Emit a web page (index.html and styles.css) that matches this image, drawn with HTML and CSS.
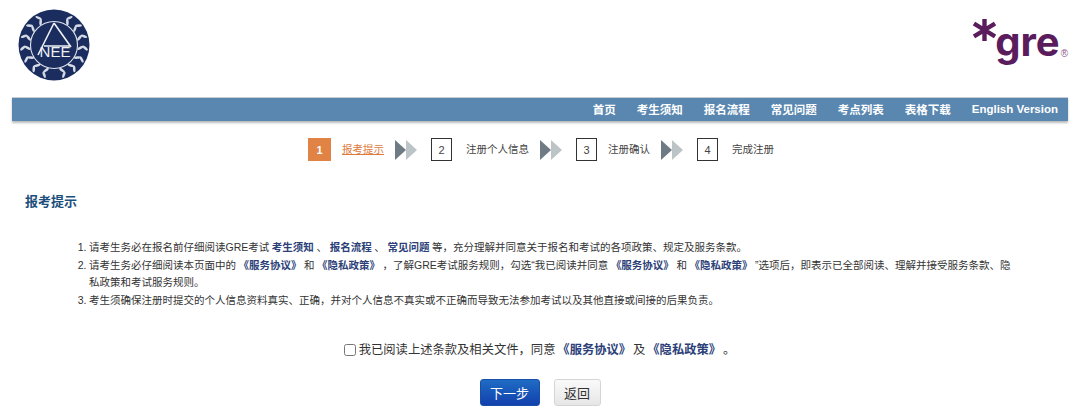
FILE: index.html
```html
<!DOCTYPE html>
<html lang="zh-CN">
<head>
  <meta charset="utf-8" />
  <title>GRE 报考提示</title>
  <link rel="stylesheet" href="styles.css">
</head>
<body>
  <div class="header">
    <svg class="nee-logo" width="72" height="72" viewBox="0 0 72 72">
      <defs>
        <g id="leaf">
          <ellipse cx="38" cy="4.8" rx="1.3" ry="3.4" fill="#d5dbe6" transform="rotate(40 38 4.8)"/>
          <ellipse cx="38" cy="9.6" rx="1.3" ry="3.4" fill="#d5dbe6" transform="rotate(-30 38 9.6)"/>
        </g>
        <g id="laurel">
          <use href="#leaf" transform="rotate(26 36 36)"/>
          <use href="#leaf" transform="rotate(48 36 36)"/>
          <use href="#leaf" transform="rotate(70 36 36)"/>
          <use href="#leaf" transform="rotate(92 36 36)"/>
          <use href="#leaf" transform="rotate(114 36 36)"/>
          <use href="#leaf" transform="rotate(136 36 36)"/>
          <use href="#leaf" transform="rotate(158 36 36)"/>
        </g>
      </defs>
      <circle cx="36" cy="36" r="35.5" fill="#1b2d5e"/>
      <use href="#laurel"/>
      <use href="#laurel" transform="translate(72 0) scale(-1 1)"/>
      <circle cx="36" cy="36" r="23.5" fill="#1b2d5e" stroke="#dfe4ec" stroke-width="1.1"/>
      <path d="M36 14 L20 46 M36 14 L53 38 M26 37 H53" fill="none" stroke="#eef1f5" stroke-width="1.6"/>
      <text class="nee-text" x="37" y="47.5" text-anchor="middle">NEE</text>
    </svg>
    <div class="gre-logo">
      <svg class="gre-star" width="23" height="22" viewBox="0 0 23 22">
        <path d="M11.5 0 V22 M1 4.5 L22 17.5 M22 4.5 L1 17.5" fill="none" stroke="#5b1c5e" stroke-width="4.4"/>
      </svg>
      <span class="gre-word">gre</span><span class="gre-reg">®</span>
    </div>
  </div>

  <div class="nav">
    <a href="#">首页</a>
    <a href="#">考生须知</a>
    <a href="#">报名流程</a>
    <a href="#">常见问题</a>
    <a href="#">考点列表</a>
    <a href="#">表格下载</a>
    <a href="#">English Version</a>
  </div>

  <div class="steps">
    <span class="step-num active">1</span>
    <a class="step-label current" href="#">报考提示</a>
    <svg class="step-arrows" width="22" height="20" viewBox="0 0 22 20"><path d="M0 0 L11 10 L0 20Z" fill="#6f7b84"/><path d="M11 0 L22 10 L11 20Z" fill="#bcc4c8"/></svg>
    <span class="step-num">2</span>
    <span class="step-label wide">注册个人信息</span>
    <svg class="step-arrows" width="22" height="20" viewBox="0 0 22 20"><path d="M0 0 L11 10 L0 20Z" fill="#6f7b84"/><path d="M11 0 L22 10 L11 20Z" fill="#bcc4c8"/></svg>
    <span class="step-num">3</span>
    <span class="step-label">注册确认</span>
    <svg class="step-arrows" width="22" height="20" viewBox="0 0 22 20"><path d="M0 0 L11 10 L0 20Z" fill="#6f7b84"/><path d="M11 0 L22 10 L11 20Z" fill="#bcc4c8"/></svg>
    <span class="step-num">4</span>
    <span class="step-label wide">完成注册</span>
  </div>

  <h2 class="title">报考提示</h2>

  <ol class="notes">
    <li>请考生务必在报名前仔细阅读GRE考试 <a href="#">考生须知</a><span class="sep">、</span><a href="#">报名流程</a><span class="sep">、</span><a href="#">常见问题</a> 等，充分理解并同意关于报名和考试的各项政策、规定及服务条款。</li>
    <li>请考生务必仔细阅读本页面中的 <a href="#">《服务协议》</a> 和 <a href="#">《隐私政策》</a> ，了解GRE考试服务规则，勾选“我已阅读并同意 <a href="#">《服务协议》</a> 和 <a href="#">《隐私政策》</a> ”选项后，即表示已全部阅读、理解并接受服务条款、隐私政策和考试服务规则。</li>
    <li>考生须确保注册时提交的个人信息资料真实、正确，并对个人信息不真实或不正确而导致无法参加考试以及其他直接或间接的后果负责。</li>
  </ol>

  <label class="agree">
    <input type="checkbox">
    <span>我已阅读上述条款及相关文件，同意 <a href="#">《服务协议》</a> 及 <a href="#">《隐私政策》</a> 。</span>
  </label>

  <div class="actions">
    <button class="btn-next">下一步</button>
    <button class="btn-back">返回</button>
  </div>
</body>
</html>
```

FILE: styles.css
```css
body {
  margin: 0;
  background-color: #fff;
  color: #333;
  font-family: "Liberation Sans", "Noto Sans CJK SC", sans-serif;
  font-size: 10.5px;
  overflow: hidden;
}

a {
  text-decoration: none;
}

.header {
  height: 97px;
  padding: 9px 12px 0 18px;
  box-sizing: border-box;
  display: flex;
  justify-content: space-between;
  align-items: flex-start;
}

.nee-text {
  font-family: "Liberation Sans", sans-serif;
  font-size: 15px;
  fill: #eef1f5;
}

.gre-logo {
  display: flex;
  align-items: flex-start;
  color: #5b1c5e;
  margin-top: 10px;
}

.gre-word {
  font-family: "Inter", sans-serif;
  font-size: 40px;
  font-weight: 700;
  line-height: 46px;
  margin-top: 0;
  margin-left: -1px;
}

.gre-reg {
  font-size: 10px;
  line-height: 10px;
  margin-top: 30px;
  margin-left: 1px;
  color: #8a5a8f;
}

.nav {
  margin: 0 12px;
  height: 24px;
  padding: 0 10px 2px 0;
  background-color: #5a87b0;
  border-top: 1px solid #c9ccce;
  box-shadow: 0 2px 2px #b8babc;
  box-sizing: border-box;
  display: flex;
  justify-content: flex-end;
  align-items: center;
  gap: 21px;
}

.nav a {
  color: #fff;
  font-size: 11.5px;
  font-weight: bold;
}

.steps {
  margin-top: 17px;
  height: 23px;
  padding-left: 2px;
  display: flex;
  justify-content: center;
  align-items: center;
}

.step-num {
  width: 21px;
  height: 23px;
  box-sizing: border-box;
  border: 1px solid #333;
  display: flex;
  align-items: center;
  justify-content: center;
  font-size: 11px;
  color: #444;
}

.step-num.active {
  width: 23px;
  background-color: #e08344;
  border-color: #e08344;
  color: #fff;
  font-weight: bold;
}

.step-label {
  margin-left: 11px;
  margin-bottom: 2px;
  color: #444;
}

.step-label.wide {
  margin-left: 14px;
}

.step-label.current {
  color: #dd7a3c;
  text-decoration: underline;
}

.step-arrows {
  margin: 0 14px 0 11px;
}

.title {
  margin: 33px 0 0 25px;
  font-size: 13px;
  line-height: 16px;
  color: #1d4f7c;
}

.notes {
  margin: 29px 0 0;
  padding: 0 66px 0 89px;
  line-height: 17.7px;
  word-spacing: -0.4px;
  color: #333;
}

.notes a {
  color: #2c3f78;
  font-weight: bold;
}

.sep {
  margin: 0 2.7px;
}

.agree {
  margin-top: 30px;
  display: flex;
  justify-content: center;
  align-items: center;
  font-size: 12.3px;
  line-height: 20px;
  padding-right: 1px;
  word-spacing: -1.5px;
}

.agree input {
  margin: 0 3px 0 0;
  width: 12px;
  height: 12px;
}

.agree a {
  color: #2c3f78;
  font-weight: bold;
}

.actions {
  margin-top: 19px;
  display: flex;
  justify-content: center;
  gap: 14px;
}

.actions button {
  height: 27px;
  border-radius: 3px;
  font-family: inherit;
  font-size: 13px;
  padding: 0;
}

.btn-next {
  width: 60px;
  color: #fff;
  background: linear-gradient(to bottom, #1f6cc4, #1240ad);
  border: 1px solid #1a4fa8;
}

.btn-back {
  width: 47px;
  color: #333;
  background: linear-gradient(to bottom, #fafafa, #e6e6e6);
  border: 1px solid #d5d5d5;
}
```
